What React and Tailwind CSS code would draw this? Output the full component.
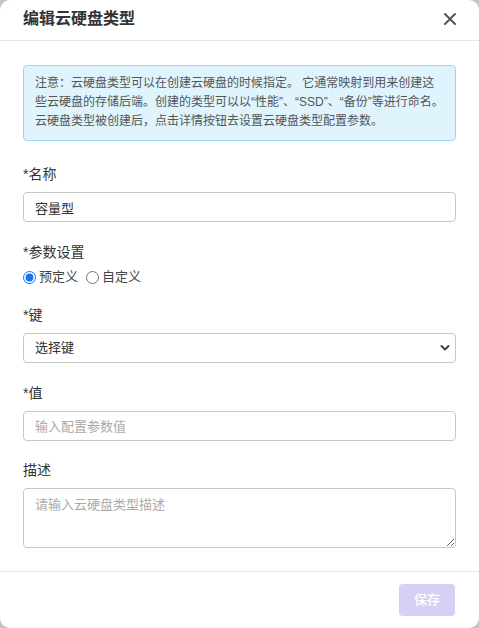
import React, { useState } from 'react';

const font = { fontFamily: '"Liberation Sans", "Noto Sans CJK SC", sans-serif' };

function Label({ children }) {
  return <div className="text-[14px] leading-[20px] text-[#333] mb-[8px]">{children}</div>;
}

export default function App() {
  const [mode, setMode] = useState('pre');

  return (
    <div className="w-[479px] h-[628px] bg-[#c4c4c4]" style={font}>
      <div className="w-full h-full bg-white rounded-[10px] flex flex-col overflow-hidden">
        {/* header */}
        <div className="h-[41px] flex items-center justify-between pl-[23px] pr-[22px] border-b border-[#e3e8ef]">
          <h2 className="text-[16px] font-bold text-[#333] -mt-[2px]">编辑云硬盘类型</h2>
          <button className="text-[#555] -mt-[2px]">
            <svg width="14" height="14" viewBox="0 0 14 14" fill="none" stroke="currentColor" strokeWidth="2" strokeLinecap="round">
              <path d="M2 2l10 10M12 2L2 12" />
            </svg>
          </button>
        </div>

        {/* body */}
        <div className="flex-1 px-[23px] pt-[24px]">
          <div className="bg-[#dff4fd] border border-[#9ad6f5] rounded-[4px] px-[11px] pt-[8px] pb-[9px] text-[12px] leading-[19px] text-[#555]">
            注意：云硬盘类型可以在创建云硬盘的时候指定。 它通常映射到用来创建这些云硬盘的存储后端。创建的类型可以以“性能”、“SSD”、“备份”等进行命名。云硬盘类型被创建后，点击详情按钮去设置云硬盘类型配置参数。
          </div>

          <div className="mt-[23px]">
            <Label>*名称</Label>
            <input
              defaultValue="容量型"
              className="w-full h-[30px] px-[11px] text-[13px] text-[#333] border border-[#c8c8c8] rounded-[4px] outline-none"
            />
          </div>

          <div className="mt-[20px]">
            <div className="text-[14px] leading-[20px] text-[#333] mb-[7px]">*参数设置</div>
            <div className="flex items-center gap-[8px] text-[13px] text-[#444] h-[16px]">
              <label className="flex items-center gap-[3px]">
                <input type="radio" name="mode" checked={mode === 'pre'} onChange={() => setMode('pre')} className="w-[13px] h-[13px] accent-[#1a73e8] m-0" />
                预定义
              </label>
              <label className="flex items-center gap-[3px]">
                <input type="radio" name="mode" checked={mode === 'custom'} onChange={() => setMode('custom')} className="w-[13px] h-[13px] m-0" />
                自定义
              </label>
            </div>
          </div>

          <div className="mt-[20px]">
            <Label>*键</Label>
            <div className="relative">
              <select className="w-full h-[30px] px-[11px] text-[13px] text-[#333] border border-[#c8c8c8] rounded-[4px] outline-none appearance-none bg-white">
                <option>选择键</option>
              </select>
              <svg className="absolute right-[6px] top-[11px] pointer-events-none" width="10" height="8" viewBox="0 0 10 8" fill="none" stroke="#444" strokeWidth="2" strokeLinecap="round" strokeLinejoin="round">
                <path d="M1.5 2l3.5 3.5L8.5 2" />
              </svg>
            </div>
          </div>

          <div className="mt-[20px]">
            <Label>*值</Label>
            <input
              placeholder="输入配置参数值"
              className="w-full h-[30px] px-[11px] text-[13px] text-[#333] placeholder:text-[#aaa] border border-[#c8c8c8] rounded-[4px] outline-none"
            />
          </div>

          <div className="mt-[19px]">
            <Label>描述</Label>
            <textarea
              placeholder="请输入云硬盘类型描述"
              className="block w-full h-[60px] px-[11px] py-[6px] text-[13px] text-[#333] placeholder:text-[#aaa] border border-[#c8c8c8] rounded-[4px] outline-none"
            />
          </div>
        </div>

        {/* footer */}
        <div className="h-[57px] border-t border-[#e3e8ef] flex items-center justify-end px-[24px]">
          <button disabled className="w-[56px] h-[32px] rounded-[4px] bg-[#d5d1f5] text-white text-[13px] font-medium">
            保存
          </button>
        </div>
      </div>
    </div>
  );
}
